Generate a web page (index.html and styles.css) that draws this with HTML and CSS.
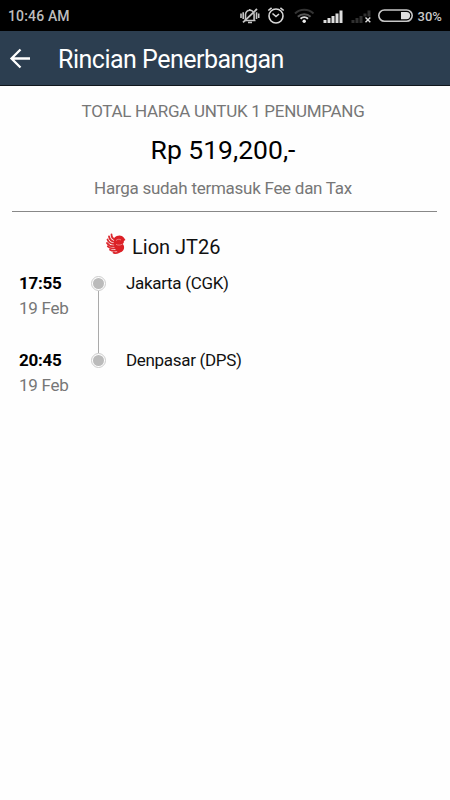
FILE: index.html
```html
<!DOCTYPE html>
<html lang="id">
<head>
    <meta charset="UTF-8">
    <meta name="viewport" content="width=device-width, initial-scale=1.0">
    <title>Rincian Penerbangan</title>
    <link rel="stylesheet" href="styles.css">
</head>
<body>
    <div class="status">
        <span class="clock">10:46 AM</span>
        <svg class="status-icons" width="204" height="22" viewBox="238 5 204 22">
            <!-- silent -->
            <g fill="none" stroke="#c4c4c4" stroke-width="1.6">
                <path d="M244.500 20.500h11M245.500 20v-5.500a4.300 4.300 0 0 1 8.600 0v5.500M248 22.500h4M249.800 9v1.500"/>
                <path d="M241 13.500v4.500M243.200 12.300v6.700M256.500 12.300v6.700M258.700 13.500v4.500"/>
                <path d="M243 22.300L257 9" stroke-width="1.800"/>
            </g>
            <!-- alarm -->
            <g fill="none" stroke="#d8d8d8" stroke-width="1.600">
                <circle cx="276" cy="16" r="7"/>
                <path d="M272.500 13.500l3.500 3 3-2.500M268.300 10.500l3.300-2.700M283.700 10.500l-3.300-2.700"/>
            </g>
            <!-- wifi -->
            <g fill="none" stroke-width="2">
                <path d="M295 13.500a13.500 13.500 0 0 1 18.500 0" stroke="#333"/>
                <path d="M297.800 16.700a9.300 9.300 0 0 1 12.800 0" stroke="#555"/>
                <path d="M300.500 18.800a5.500 5.500 0 0 1 7.500 0" stroke="#ddd"/>
                <circle cx="304.200" cy="21.200" r="1.700" fill="#eee"/>
            </g>
            <!-- signal -->
            <path fill="#ddd" d="M323.500 20h3v3h-3zM327.500 18h3v5h-3zM331.500 16h3v7h-3zM335.500 13.500h3v9.500h-3zM339.500 10.500h3v12.500h-3z"/>
            <path fill="#303030" d="M351.500 20h3v3h-3zM355.500 18h3v5h-3zM359.500 16h3v7h-3zM363.500 13.500h3v3h-3zM367.500 10.500h3v6h-3z"/>
            <path fill="none" stroke="#ddd" stroke-width="1.400" d="M365.500 17.500l4.800 4.800M370.300 17.500l-4.800 4.800"/>
            <!-- battery -->
            <rect x="378.800" y="10" width="33.400" height="11.200" rx="5.600" fill="none" stroke="#c8c8c8" stroke-width="1.600"/>
            <path fill="#ddd" d="M401 12h5.500a3.600 3.600 0 0 1 0 7.200h-5.500z"/>
            <text class="battery" x="417.500" y="21">30%</text>
        </svg>
    </div>

    <div class="toolbar">
        <svg width="22" height="22" viewBox="0 0 22 22">
            <path fill="none" stroke="#fff" stroke-width="2.300" d="M21 11.500H2.500M11.500 2.500L2.500 11.500l9 9"/>
        </svg>
        <h1>Rincian Penerbangan</h1>
    </div>

    <div class="summary">
        <p class="label">TOTAL HARGA UNTUK 1 PENUMPANG</p>
        <p class="price">Rp 519,200,-</p>
        <p class="note">Harga sudah termasuk Fee dan Tax</p>
    </div>

    <div class="airline">
        <svg width="20" height="22" viewBox="0 0 20 22">
            <!-- wing -->
            <g fill="none" stroke="#dc2a30" stroke-width="1.800" stroke-linecap="round">
                <path d="M5.500 1.500C5.500 4 7 6 9.500 6.500"/>
                <path d="M3 3.500C3.500 6.500 6 8.500 9 9"/>
                <path d="M1.500 6.500C2.500 9.500 5.500 11 9 11"/>
                <path d="M1 10C2.500 12.500 6 13.500 9 13"/>
                <path d="M1.800 13.300C4 15.500 7 15.800 10 15"/>
                <path d="M4 16.700C6.500 18.200 9 18 11.500 17"/>
                <path d="M7.500 19.600C9.500 20.300 12 20 13.500 18.500"/>
            </g>
            <!-- head and body -->
            <path fill="#dc2026" d="M8.500 4.500C11 1.800 16 1.600 17.700 4.500L19.500 7l-1.700 1c.3 1.200-.2 2.200-1 3 2.200 2.500 1.500 6-1 7.800-1.800 1-4 .8-5.500-.5L8.300 14 8 8z"/>
            <path fill="none" stroke="#f6b5b7" stroke-width=".6" d="M10 7.500c1.500-1.500 3.500-1.500 5-.5M10 11.300c2 1.200 4.300 1 6.500-.2"/>
        </svg>
        <span>Lion JT26</span>
    </div>

    <div class="route">
        <div class="stop">
            <div class="when">
                <b>17:55</b>
                <span>19 Feb</span>
            </div>
            <div class="track">
                <div class="dot"></div>
                <div class="line"></div>
            </div>
            <div class="city">Jakarta (CGK)</div>
        </div>
        <div class="stop">
            <div class="when">
                <b>20:45</b>
                <span>19 Feb</span>
            </div>
            <div class="track">
                <div class="dot"></div>
            </div>
            <div class="city">Denpasar (DPS)</div>
        </div>
    </div>
</body>
</html>
```
FILE: styles.css
```css
* {
    box-sizing: border-box;
}

body {
    margin: 0;
    font-family: Roboto, sans-serif;
    background: #fefefe;
    color: #111;
}

p, h1 {
    margin: 0;
    font-weight: normal;
}

svg {
    display: block;
    flex: none;
}

.status {
    height: 31px;
    padding: 0 8px;
    background: #000;
    display: flex;
    align-items: center;
    justify-content: space-between;
}

.clock {
    font-size: 14px;
    font-weight: 500;
    letter-spacing: 0.15px;
    color: #bdbdbd;
}

.battery {
    font-size: 13px;
    font-weight: 500;
    fill: #c8c8c8;
}

.toolbar {
    height: 55px;
    padding-left: 9px;
    background: #2c3e50;
    border-bottom: 1px solid #10161c;
    display: flex;
    align-items: center;
    gap: 27px;
}

.toolbar h1 {
    padding-top: 3px;
    font-size: 25px;
    line-height: 30px;
    letter-spacing: -0.5px;
    color: #fff;
}

.summary {
    height: 125px;
    margin: 0 13px 0 12px;
    padding: 13px 3px 0 0;
    text-align: center;
    box-shadow: 0 1px 0 #888;
}

.label, .note {
    font-size: 17px;
    line-height: 24px;
    letter-spacing: -0.3px;
    color: #777;
}

.note {
    letter-spacing: -0.27px;
}

.price {
    font-size: 26.5px;
    line-height: 30px;
    margin: 12px 0 11px;
    color: #000;
}

.airline {
    height: 24px;
    margin-top: 23px;
    padding-left: 106px;
    display: flex;
    align-items: center;
    gap: 6px;
    font-size: 20px;
}

.airline svg {
    margin-top: -4px;
}

.airline span {
    padding-top: 2px;
}

.route {
    padding: 13px 19px;
}

.stop {
    display: flex;
    height: 77px;
}

.when {
    width: 72px;
    display: flex;
    flex-direction: column;
    font-size: 17px;
    line-height: 25px;
    letter-spacing: -0.27px;
    color: #777;
}

.when b {
    color: #000;
}

.track {
    width: 15px;
    display: flex;
    flex-direction: column;
    align-items: center;
    padding-top: 5px;
}

.dot {
    width: 15px;
    height: 15px;
    border: 1px solid #ccc;
    border-radius: 50%;
    padding: 1px;
    background: #bbb content-box;
    flex: none;
}

.line {
    width: 1px;
    height: 62px;
    background: #aaa;
    flex: none;
}

.city {
    padding-left: 20px;
    font-size: 17px;
    line-height: 25px;
    letter-spacing: -0.32px;
}
```
